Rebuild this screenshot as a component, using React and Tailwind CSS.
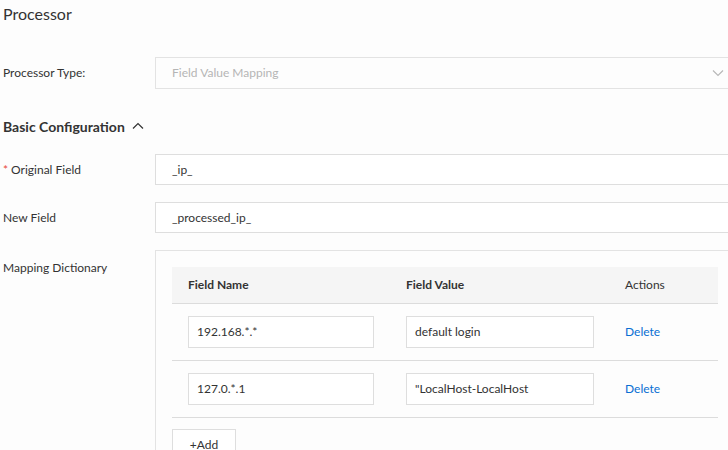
import React from "react";

const font = { fontFamily: 'Lato, "Noto Sans", sans-serif' };

const Field = ({ label, required, value }) => (
  <div className="flex items-center h-[31px]">
    <div className="w-[155px] pl-[3px] text-[12px] text-[#333]">
      {required && <span className="text-[#e84a3c] mr-[3px]">*</span>}
      {label}
    </div>
    <div className="w-[580px] h-[31px] border border-[#dedede] bg-white flex items-center px-[16px] text-[12px] text-[#333]">
      {value}
    </div>
  </div>
);

const rows = [
  { name: "192.168.*.*", value: "default login" },
  { name: "127.0.*.1", value: "\"LocalHost-LocalHost" },
];

export default function App() {
  return (
    <div className="w-[728px] h-[450px] overflow-hidden bg-[#fdfdfd]" style={font}>
      <div className="w-[740px]">
        <h1 className="pl-[3px] pt-[3px] text-[16px] leading-[22px] text-[#333]">Processor</h1>

        {/* processor type */}
        <div className="flex items-center h-[32px] mt-[32px]">
          <div className="w-[155px] pl-[3px] text-[12px] text-[#333]">Processor Type:</div>
          <div className="w-[580px] h-[32px] border border-[#e3e3e3] flex items-center justify-between pl-[16px] pr-[6px] text-[12px] text-[#b5b5b5]">
            <span>Field Value Mapping</span>
            <svg width="12" height="8" viewBox="0 0 12 8" className="mr-[4px]">
              <path d="M1 1.5 L6 6.5 L11 1.5" fill="none" stroke="#b8b8b8" strokeWidth="1.2" />
            </svg>
          </div>
        </div>

        {/* section */}
        <div className="flex items-center pl-[3px] mt-[25px] h-[24px] text-[14px] font-bold text-[#333]">
          Basic Configuration
          <svg width="12" height="8" viewBox="0 0 12 8" className="ml-[7px]">
            <path d="M1 6.5 L6 1.5 L11 6.5" fill="none" stroke="#333" strokeWidth="1.2" />
          </svg>
        </div>

        <div className="mt-[16px] flex flex-col gap-[17px]">
          <Field label="Original Field" required value="_ip_" />
          <Field label="New Field" value="_processed_ip_" />
        </div>

        {/* mapping dictionary */}
        <div className="flex mt-[17px]">
          <div className="w-[155px] pl-[3px] pt-[9px] text-[12px] text-[#333]">Mapping Dictionary</div>
          <div className="w-[580px] border border-[#e3e3e3] pt-[16px] px-[16px] pb-[16px]">
            <table className="w-[546px] border-collapse text-[12px] text-[#333]">
              <thead>
                <tr className="bg-[#f5f5f5] h-[36px] border-b border-[#dcdcdc]">
                  <th className="w-[218px] text-left font-bold pl-[16px]">Field Name</th>
                  <th className="w-[219px] text-left font-bold pl-[16px]">Field Value</th>
                  <th className="text-left font-normal pl-[16px]">Actions</th>
                </tr>
              </thead>
              <tbody>
                {rows.map((r) => (
                  <tr key={r.name} className="h-[57px] border-b border-[#dcdcdc]">
                    <td className="pl-[16px]">
                      <div className="w-[186px] h-[32px] border border-[#dedede] bg-white flex items-center px-[8px]">{r.name}</div>
                    </td>
                    <td className="pl-[16px]">
                      <div className="w-[188px] h-[32px] border border-[#dedede] bg-white flex items-center px-[8px]">{r.value}</div>
                    </td>
                    <td className="pl-[16px] pt-[1px] text-[#0a6fd3]">Delete</td>
                  </tr>
                ))}
              </tbody>
            </table>
            <button className="mt-[11px] h-[32px] w-[64px] border border-[#dedede] bg-white text-[12px] text-[#333]">+Add</button>
          </div>
        </div>
      </div>
    </div>
  );
}
